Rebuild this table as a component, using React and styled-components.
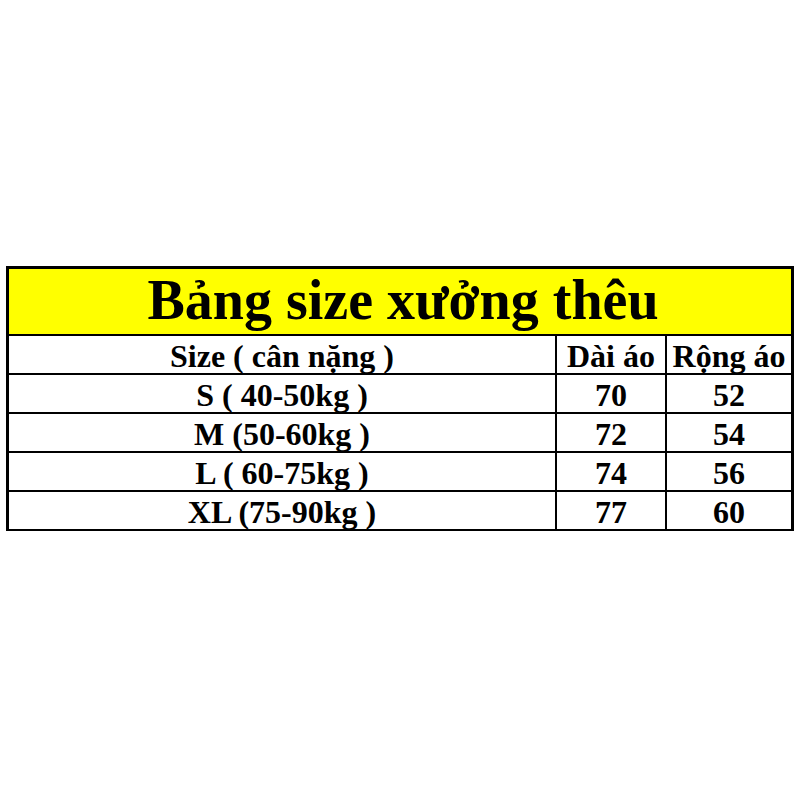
import React from "react";
import styled, { createGlobalStyle } from "styled-components";

const Global = createGlobalStyle`
  html, body { margin: 0; padding: 0; background: #ffffff; }
  body { font-family: "Liberation Serif", "Times New Roman", serif; }
`;

const Page = styled.div`
  width: 800px;
  height: 800px;
  padding: 266px 6px 0 6px;
  box-sizing: border-box;
`;

const Table = styled.div`
  border: 3px solid #000;
  border-bottom-width: 2px;
  display: grid;
  grid-template-columns: 546px 110px 1fr;
  background: #fff;
`;

const Title = styled.div`
  grid-column: 1 / -1;
  background: #ffff00;
  height: 65px;
  display: flex;
  align-items: center;
  justify-content: center;
  font-weight: 700;
  font-size: 56px;
  color: #000;
  padding-left: 6px;
  line-height: 1;
  padding-bottom: 4px;
  box-sizing: border-box;
`;

const Cell = styled.div`
  height: 39px;
  box-sizing: border-box;
  border-top: 2px solid #000;
  border-left: ${(p) => (p.$first ? "none" : "2px solid #000")};
  display: flex;
  align-items: center;
  justify-content: center;
  font-weight: 700;
  font-size: 32px;
  line-height: 1;
  color: #000;
  padding-top: 2px;
`;

const rows = [
  ["S ( 40-50kg )", "70", "52"],
  ["M (50-60kg )", "72", "54"],
  ["L ( 60-75kg )", "74", "56"],
  ["XL (75-90kg )", "77", "60"],
];

export default function App() {
  return (
    <>
      <Global />
      <Page>
        <Table>
          <Title>Bảng size xưởng thêu</Title>
          <Cell $first>Size ( cân nặng )</Cell>
          <Cell>Dài áo</Cell>
          <Cell>Rộng áo</Cell>
          {rows.map((r) => (
            <React.Fragment key={r[0]}>
              <Cell $first>{r[0]}</Cell>
              <Cell>{r[1]}</Cell>
              <Cell>{r[2]}</Cell>
            </React.Fragment>
          ))}
        </Table>
      </Page>
    </>
  );
}
